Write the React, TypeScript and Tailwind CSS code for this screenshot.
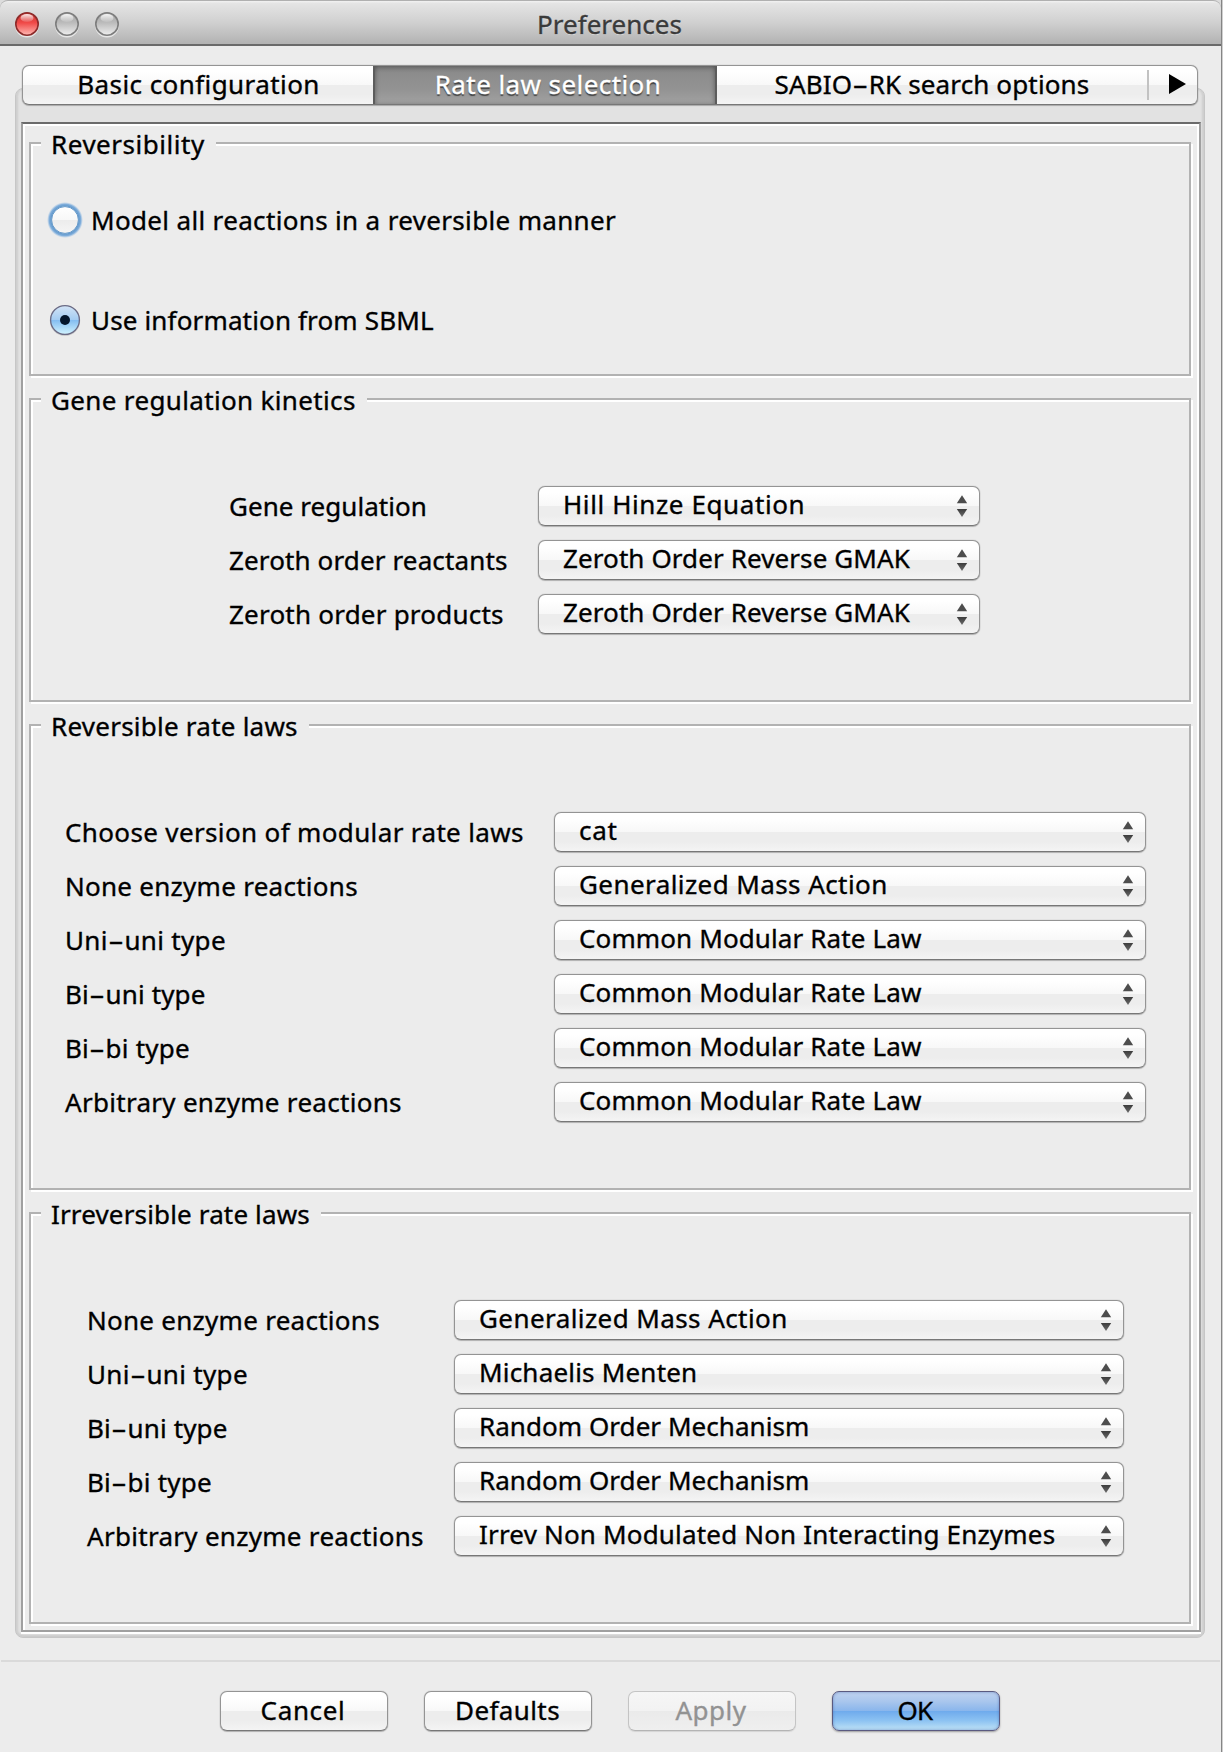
import React, { ReactNode } from 'react';

type Item = { text: string; cls?: string };
type Row = { label: Item; value: Item };

const t = (text: string, cls = ''): Item => ({ text, cls });

/** Text run whose hyphens are drawn wide, as in the system font. */
function Txt({ item, className = '' }: { item: Item; className?: string }) {
  const parts = item.text.split('-');
  return (
    <span className={`whitespace-pre ${item.cls ?? ''} ${className}`}>
      {parts.map((p, i) => (
        <React.Fragment key={i}>
          {i > 0 && <span className="mx-[4px] inline-block scale-x-[1.85]">-</span>}
          {p}
        </React.Fragment>
      ))}
    </span>
  );
}

function Arrows() {
  return (
    <svg width="12" height="22" viewBox="0 0 12 22" className="mr-[11px] mt-[8px] shrink-0">
      <defs>
        <linearGradient id="arrow" x1="0" y1="0" x2="0" y2="1">
          <stop offset="0" stopColor="#3c3c3c" />
          <stop offset="1" stopColor="#6a6a6a" />
        </linearGradient>
      </defs>
      <path d="M6 0.2 L11.2 8.2 H0.8 Z" fill="#4d4d4d" />
      <path d="M0.8 14 H11.2 L6 22 Z" fill="url(#arrow)" />
    </svg>
  );
}

const chrome =
  'border border-[#949494] border-b-[#777777] shadow-[0_1px_1px_rgba(0,0,0,0.22),0_0_1px_rgba(0,0,0,0.4)] bg-[linear-gradient(180deg,#ffffff_0%,#ffffff_15%,#f8f8f8_49%,#ededed_50%,#ededed_75%,#f4f4f4_100%)]';

function Combo({ item }: { item: Item }) {
  return (
    <div className={`flex h-10 justify-between rounded-[7px] pl-6 ${chrome}`}>
      <Txt item={item} className="-mt-px" />
      <Arrows />
    </div>
  );
}

function Group({ title, className, children }: { title: Item; className: string; children: ReactNode }) {
  return (
    <section
      className={`w-[1162px] border-2 border-[#b2b2b2] shadow-[inset_2px_2px_0_#ffffff,2px_2px_0_#ffffff] ${className}`}
    >
      <h2 className="-mt-[18px] ml-[10px] h-9 w-fit bg-[#ececec] pl-[10px] pr-[11px]">
        <Txt item={title} />
      </h2>
      {children}
    </section>
  );
}

function Form({ rows, labels, className }: { rows: Row[]; labels: string; className: string }) {
  return (
    <div className={`flex flex-col gap-[14px] ${className}`}>
      {rows.map((r, i) => (
        <div key={i} className="flex h-10">
          <div className={`shrink-0 pt-[2px] ${labels}`}>
            <Txt item={r.label} />
          </div>
          <div className="flex-1">
            <Combo item={r.value} />
          </div>
        </div>
      ))}
    </div>
  );
}

const none = t('None enzyme reactions', 'tracking-[0.27px]');
const uniuni = t('Uni-uni type', 'tracking-[0.32px]');
const biuni = t('Bi-uni type', 'tracking-[0.15px]');
const bibi = t('Bi-bi type', 'tracking-[0.2px]');
const arbitrary = t('Arbitrary enzyme reactions', 'tracking-[0.29px]');
const gma = t('Generalized Mass Action', 'tracking-[0.42px]');
const common = t('Common Modular Rate Law', 'tracking-[0.12px]');
const random = t('Random Order Mechanism', 'tracking-[0.05px]');
const zeroth = t('Zeroth Order Reverse GMAK', 'tracking-[0.1px]');

const geneRows: Row[] = [
  { label: t('Gene regulation', 'tracking-[0.05px]'), value: t('Hill Hinze Equation', 'tracking-[0.6px]') },
  { label: t('Zeroth order reactants', 'tracking-[0.13px]'), value: zeroth },
  { label: t('Zeroth order products', 'tracking-[0.22px]'), value: zeroth },
];
const reversibleRows: Row[] = [
  { label: t('Choose version of modular rate laws', 'tracking-[0.36px]'), value: t('cat', 'tracking-[0.7px]') },
  { label: none, value: gma },
  { label: uniuni, value: common },
  { label: biuni, value: common },
  { label: bibi, value: common },
  { label: arbitrary, value: common },
];
const irreversibleRows: Row[] = [
  { label: none, value: gma },
  { label: uniuni, value: t('Michaelis Menten', 'tracking-[0.2px]') },
  { label: biuni, value: random },
  { label: bibi, value: random },
  { label: arbitrary, value: t('Irrev Non Modulated Non Interacting Enzymes', 'tracking-[0.18px]') },
];

function Light({ red }: { red?: boolean }) {
  const id = red ? 'red' : 'gray';
  return (
    <svg width="26" height="28" viewBox="0 0 26 28">
      <defs>
        <linearGradient id={`${id}-body`} x1="0" y1="0" x2="0" y2="1">
          <stop offset="0" stopColor={red ? '#c8322f' : '#a2a2a2'} />
          <stop offset="0.45" stopColor={red ? '#f04a48' : '#bcbcbc'} />
          <stop offset="1" stopColor={red ? '#ffb9b4' : '#eeeeee'} />
        </linearGradient>
        <linearGradient id={`${id}-gloss`} x1="0" y1="0" x2="0" y2="1">
          <stop offset="0" stopColor="#ffffff" stopOpacity="0.9" />
          <stop offset="1" stopColor="#ffffff" stopOpacity="0.1" />
        </linearGradient>
      </defs>
      <circle cx="13" cy="14.5" r="12" fill="#f2f2f2" opacity="0.8" />
      <circle cx="13" cy="13" r="11.2" fill={`url(#${id}-body)`} stroke={red ? '#8c2b2a' : '#7d7d7d'} strokeWidth="1.6" />
      <ellipse cx="13" cy="7" rx="6.5" ry="4" fill={`url(#${id}-gloss)`} />
    </svg>
  );
}

function Radio({ on }: { on?: boolean }) {
  return on ? (
    <svg width="36" height="36" viewBox="0 0 36 36">
      <defs>
        <linearGradient id="radio-on" x1="0" y1="0" x2="0" y2="1">
          <stop offset="0" stopColor="#d3e4f6" />
          <stop offset="0.49" stopColor="#a4ccf2" />
          <stop offset="0.51" stopColor="#83bdf1" />
          <stop offset="1" stopColor="#d2f4ff" />
        </linearGradient>
      </defs>
      <circle cx="18" cy="18.8" r="15.2" fill="#000000" opacity="0.15" />
      <circle cx="18" cy="18" r="14.4" fill="url(#radio-on)" stroke="#6b6b85" strokeWidth="1.3" />
      <circle cx="18" cy="18" r="5" fill="#04162c" />
    </svg>
  ) : (
    <svg width="36" height="36" viewBox="0 0 36 36">
      <defs>
        <linearGradient id="radio-off" x1="0" y1="0" x2="0" y2="1">
          <stop offset="0" stopColor="#ffffff" />
          <stop offset="0.49" stopColor="#f8f8f8" />
          <stop offset="0.51" stopColor="#ececec" />
          <stop offset="1" stopColor="#f5f5f5" />
        </linearGradient>
        <radialGradient id="radio-glow">
          <stop offset="0.76" stopColor="#5f97cb" />
          <stop offset="0.88" stopColor="#74a7d9" stopOpacity="0.9" />
          <stop offset="1" stopColor="#9cc2e8" stopOpacity="0" />
        </radialGradient>
      </defs>
      <circle cx="18" cy="18" r="18" fill="url(#radio-glow)" />
      <circle cx="18" cy="18" r="13.4" fill="url(#radio-off)" stroke="#6a9ccb" strokeWidth="1" />
    </svg>
  );
}

const button = 'flex h-10 w-[168px] justify-center rounded-[7px]';

export default function App() {
  return (
    <div className="flex h-[1752px] w-[1223px] bg-[#cfcfcf] font-['Noto_Sans',sans-serif] text-[26px] leading-9 text-black [-webkit-text-stroke:0.35px_currentColor]">
      <div className="h-full w-[1222px] border-r border-[#858585] bg-[#ececec]">
        <header className="bg-[#dcdcdc]">
          <div className="relative flex h-[46px] justify-center rounded-t-[8px] border-b-2 border-b-[#6a6a6a] border-t border-t-[#b0b0b0] bg-[linear-gradient(180deg,#f2f2f2_0%,#e4e4e4_6%,#d0d0d0_50%,#b2b2b2_100%)]">
            <div className="absolute left-[14px] top-[10px] flex gap-[14px]">
              <Light red />
              <Light />
              <Light />
            </div>
            <h1 className="mt-[5px] pr-[2px] text-[#3a3a3a] [text-shadow:0_1px_0_rgba(255,255,255,0.5)]">
              <Txt item={t('Preferences')} />
            </h1>
          </div>
        </header>

        <nav className={`relative z-10 ml-[22px] mt-[19px] flex h-10 w-[1176px] overflow-hidden rounded-[7px] ${chrome}`}>
          <div className="flex w-[350px] justify-center pl-px">
            <Txt item={t('Basic configuration', 'tracking-[0.42px]')} />
          </div>
          <div className="-my-px flex w-[344px] justify-center border-x-2 border-t border-[#5c5c5c] bg-[linear-gradient(180deg,#7c7c7c_0%,#8c8c8c_18%,#939393_60%,#9e9e9e_88%,#a8a8a8_100%)] pl-[6px] text-white shadow-[inset_0_0_5px_rgba(0,0,0,0.4)] [text-shadow:0_2px_1px_rgba(0,0,0,0.55)]">
            <Txt item={t('Rate law selection', 'tracking-[0.42px]')} />
          </div>
          <div className="flex w-[430px] justify-center">
            <Txt item={t('SABIO-RK search options', 'tracking-[0.14px]')} />
          </div>
          <div className="my-1 flex flex-1 border-l-2 border-[#c2c2c2] pl-5 pt-[4px]">
            <svg width="17" height="20" viewBox="0 0 17 20">
              <path d="M0 0 L17 10 L0 20 Z" fill="#000000" />
            </svg>
          </div>
        </nav>

        <main className="-mt-[17px] ml-[15px] h-[1550px] w-[1190px] rounded-[8px] border border-[#c6c6c6] bg-[#e2e2e2] px-[5px] pt-[33px] shadow-[inset_2px_0_2px_#cfcfcf,inset_-2px_0_2px_#cfcfcf,inset_0_-2px_2px_#cacaca]">
          <div className="flex h-[1510px] w-[1180px] flex-col gap-[22px] border-2 border-[#a0a0a0] border-t-[#6b6b6b] bg-[#ececec] pl-[6px] pt-[18px] shadow-[inset_2px_2px_0_#ffffff,inset_-2px_0_0_#ffffff,0_2px_0_#ffffff]">
            <Group title={t('Reversibility', 'tracking-[0.53px]')} className="h-[234px]">
              <div className="ml-4 mt-[40px] flex flex-col gap-16">
                <div className="flex h-9 items-center gap-2">
                  <Radio />
                  <Txt item={t('Model all reactions in a reversible manner', 'tracking-[0.34px]')} />
                </div>
                <div className="flex h-9 items-center gap-2">
                  <Radio on />
                  <Txt item={t('Use information from SBML', 'tracking-[0.15px]')} />
                </div>
              </div>
            </Group>
            <Group title={t('Gene regulation kinetics', 'tracking-[0.35px]')} className="h-[304px]">
              <Form rows={geneRows} labels="w-[309px]" className="ml-[198px] mt-[68px] w-[751px]" />
            </Group>
            <Group title={t('Reversible rate laws', 'tracking-[0.24px]')} className="h-[466px]">
              <Form rows={reversibleRows} labels="w-[489px]" className="ml-[34px] mt-[68px] w-[1081px]" />
            </Group>
            <Group title={t('Irreversible rate laws', 'tracking-[0.15px]')} className="h-[412px]">
              <Form rows={irreversibleRows} labels="w-[367px]" className="ml-[56px] mt-[68px] w-[1037px]" />
            </Group>
          </div>
        </main>

        <footer className="mx-px mt-[22px] flex gap-9 border-t-2 border-[#dadada] pl-[219px] pt-[29px]">
          <button className={`${button} pr-[2px] ${chrome}`}>
            <Txt item={t('Cancel', 'tracking-[0.65px]')} />
          </button>
          <button className={`${button} pr-px ${chrome}`}>
            <Txt item={t('Defaults', 'tracking-[0.4px]')} />
          </button>
          <button
            className={`${button} border border-[#c4c4c4] border-b-[#b4b4b4] bg-[linear-gradient(180deg,#f6f6f6_0%,#f2f2f2_49%,#eaeaea_50%,#efefef_100%)] pr-[2px] text-[#929292] shadow-[0_1px_1px_rgba(0,0,0,0.1)]`}
          >
            <Txt item={t('Apply', 'tracking-[0.5px]')} />
          </button>
          <button
            className={`${button} border border-[#5a5a80] bg-[linear-gradient(180deg,#bfd2ef_0%,#a9c6ed_25%,#8ab6ec_49%,#6fabed_51%,#8cc2f2_75%,#bfe2f6_100%)] pr-[2px] shadow-[inset_0_0_3px_rgba(70,100,170,0.6),0_1px_2px_rgba(0,0,0,0.35)]`}
          >
            <Txt item={t('OK', 'tracking-[-0.8px]')} />
          </button>
        </footer>
      </div>
    </div>
  );
}
